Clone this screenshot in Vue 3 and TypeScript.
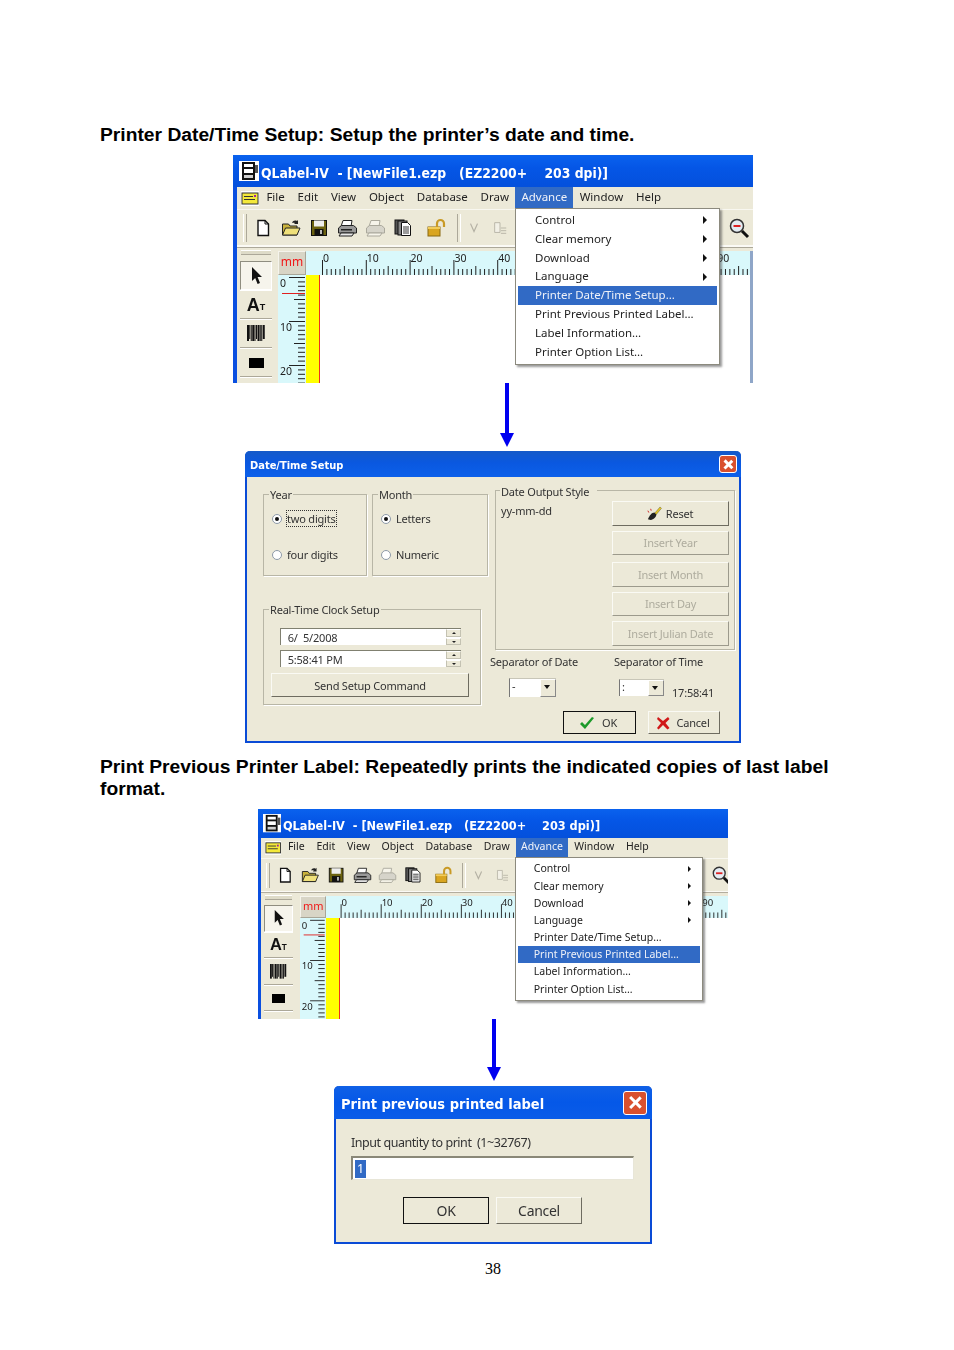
<script setup lang="ts">
interface Win { id: string; selected: string }
const windows: Win[] = [
  { id: 'a', selected: 'Printer Date/Time Setup…' },
  { id: 'b', selected: 'Print Previous Printed Label…' },
]
const appTitle = 'QLabel-IV  - [NewFile1.ezp   (EZ2200+    203 dpi)]'
const dateText = ' 6/  5/2008'
const timeText = ' 5:58:41 PM'
const quantityText = 'Input quantity to print  (1~32767)'
const menus: string[] = ['File', 'Edit', 'View', 'Object', 'Database', 'Draw', 'Advance', 'Window', 'Help']
const items: { label: string; sub: boolean }[] = [
  { label: 'Control', sub: true },
  { label: 'Clear memory', sub: true },
  { label: 'Download', sub: true },
  { label: 'Language', sub: true },
  { label: 'Printer Date/Time Setup…', sub: false },
  { label: 'Print Previous Printed Label…', sub: false },
  { label: 'Label Information…', sub: false },
  { label: 'Printer Option List…', sub: false },
]
// Labels 50–80 lie behind the open menu, so they are not drawn.
const hTicks = Array.from({ length: 100 }, (_, mm) => ({
  x: 16 + mm * 4.38,
  len: mm % 10 === 0 ? 15 : mm % 5 === 0 ? 9 : 6,
  label: mm % 10 === 0 && (mm <= 40 || mm >= 90) ? String(mm) : '',
}))
const vTicks = Array.from({ length: 26 }, (_, mm) => ({
  y: 2 + mm * 4.4,
  len: mm % 10 === 0 ? 16 : mm % 5 === 0 ? 11 : 7,
  label: mm % 10 === 0 ? String(mm) : '',
}))
const bars: number[] = [0, 3, 5, 7, 10, 12, 14, 17, 19, 21]
</script>

<template>
  <div class="page">
    <h2 class="heading first">Printer Date/Time Setup: Setup the printer’s date and time.</h2>

    <template v-for="w in windows" :key="w.id">
      <h2 v-if="w.id === 'b'" class="heading second">Print Previous Printer Label: Repeatedly prints the indicated copies of last label format.</h2>

      <div class="shot" :class="'shot-' + w.id">
        <div class="app">
          <div class="app-title">
            <svg class="app-icon" viewBox="0 0 20 20" width="20" height="20">
              <rect width="20" height="20" fill="#fff" />
              <rect x="3" y="1" width="13" height="18" fill="#111" />
              <rect x="5" y="3" width="9" height="3" fill="#fff" />
              <rect x="5" y="8" width="9" height="4" fill="#fff" />
              <rect x="5" y="14" width="9" height="3" fill="#cfcfcf" />
              <rect x="16" y="4" width="3" height="8" fill="#555" />
            </svg>
            <span class="app-name">{{ appTitle }}</span>
          </div>

          <div class="menubar">
            <svg class="menu-icon" viewBox="0 0 18 15" width="18" height="15">
              <rect width="18" height="15" fill="#fff" />
              <rect x="1" y="2" width="16" height="11" fill="#f4e93a" stroke="#333" />
              <rect x="3" y="5" width="9" height="1" fill="#333" />
              <rect x="3" y="8" width="11" height="1" fill="#333" />
              <rect x="13" y="4" width="2" height="2" fill="#a020a0" />
            </svg>
            <span v-for="m in menus" :key="m" class="menu-item" :class="{ active: m === 'Advance' }">{{ m }}</span>
          </div>

          <div class="toolbar">
            <span class="grip"></span>
            <span class="tb">
              <svg viewBox="0 0 20 20" width="20" height="20"><path d="M5 2.500h7l3.500 3.500v11.500H5z" fill="#fff" stroke="#111" stroke-width="1.400" /><path d="M12 2.500v3.500h3.500" fill="none" stroke="#111" /></svg>
            </span>
            <span class="tb">
              <svg viewBox="0 0 20 20" width="20" height="20"><path d="M1.500 6h6l1.500 2h7v9h-14.500z" fill="#c9b23c" stroke="#222" /><path d="M1.500 17l3-7h14.500l-3 7z" fill="#efe07a" stroke="#222" /><path d="M11 5c1-2.500 3-3 5-2l1 -1v4h-4l1-1c-1-.5-2-.5-3 0" fill="#222" /></svg>
            </span>
            <span class="tb">
              <svg viewBox="0 0 20 20" width="20" height="20"><rect x="2.500" y="2.500" width="15" height="15" fill="#6b6210" stroke="#111" /><rect x="5" y="2.500" width="10" height="6" fill="#eee" /><rect x="5.500" y="11" width="9" height="6.500" fill="#111" /><rect x="11" y="12" width="2" height="4" fill="#bbb" /></svg>
            </span>
            <span class="tb">
              <svg viewBox="0 0 22 20" width="22" height="20"><path d="M7 2.500h9l-1 6H5z" fill="#fff" stroke="#222" /><path d="M2.500 10l3-2.500h12l3 2.500v5H2.500z" fill="#999" stroke="#222" /><path d="M5 15h13l-2 3H3z" fill="#e8e8e8" stroke="#222" /><rect x="5" y="11" width="11" height="1.500" fill="#222" /></svg>
            </span>
            <span class="tb">
              <svg viewBox="0 0 22 20" width="22" height="20"><path d="M7 2.500h9l-1 6H5z" fill="#f6f4ea" stroke="#aaa89c" /><path d="M2.500 10l3-2.500h12l3 2.500v5H2.500z" fill="#d6d4ca" stroke="#aaa89c" /><path d="M5 15h13l-2 3H3z" fill="#f6f4ea" stroke="#aaa89c" /></svg>
            </span>
            <span class="tb">
              <svg viewBox="0 0 20 20" width="20" height="20"><rect x="2" y="2" width="9" height="14" fill="#555" stroke="#111" /><rect x="5" y="3" width="9" height="14" fill="#888" stroke="#111" /><path d="M8.500 4.500h6l3 3v10h-9z" fill="#fff" stroke="#111" /><path d="M10 9h6M10 11h6M10 13h6M10 15h6" stroke="#222" stroke-width=".9" /></svg>
            </span>
            <span class="tb lock">
              <svg viewBox="0 0 22 20" width="22" height="20"><rect x="2" y="9" width="12" height="9" fill="#d9a520" stroke="#8a6a10" /><path d="M2 9h12v2H2z" fill="#f3cd5a" /><path d="M11 9V5.500a3.500 3.500 0 0 1 7 0V9" fill="none" stroke="#c99a25" stroke-width="2.200" /></svg>
            </span>
            <span class="tb-sep"></span>
            <span class="tb tb-narrow">
              <svg viewBox="0 0 16 16" width="14" height="14"><path d="M4 3l4 9 4-9" fill="none" stroke="#b4b1a4" stroke-width="1.400" /></svg>
            </span>
            <span class="tb tb-narrow">
              <svg viewBox="0 0 18 18" width="16" height="16"><path d="M3 3h6v11H3z" fill="#f2f0e6" stroke="#b4b1a4" /><path d="M10 9h6M10 12h6M10 15h6" stroke="#b4b1a4" /></svg>
            </span>
            <span class="tb zoomer">
              <svg viewBox="0 0 22 22" width="22" height="22"><circle cx="9" cy="9" r="6.500" fill="#e4ecf2" stroke="#333" stroke-width="1.500" /><path d="M5.500 9h7" stroke="#d22" stroke-width="2" /><path d="M14 14l6 6" stroke="#111" stroke-width="3" /></svg>
            </span>
          </div>

          <div class="work">
            <div class="tools">
              <div class="tool-grip"></div>
              <div class="tool pressed">
                <svg viewBox="0 0 14 20" width="14" height="20"><path d="M3 1v14l3.200-3 2.400 6 2.400-1-2.400-6H13z" fill="#111" /></svg>
              </div>
              <div class="tool tool-a"><span class="big-a">A</span><span class="small-t">T</span></div>
              <div class="tool">
                <svg viewBox="0 0 18 17" width="18" height="17">
                  <rect v-for="(b, i) in bars" :key="i" :x="b * .75" y="0" :width="i % 3 === 0 ? 2 : 1" :height="i % 4 === 1 ? 14 : 16" fill="#111" />
                </svg>
              </div>
              <div class="tool"><span class="black-rect"></span></div>
              <div class="tool tool-last"></div>
            </div>

            <div class="view">
              <div class="corner">mm</div>
              <svg class="h-ruler" width="450" height="24">
                <rect v-for="t in hTicks" :key="t.x" :x="t.x" :y="24 - t.len" width="1" :height="t.len" fill="#222" />
                <template v-for="t in hTicks" :key="'l' + t.x">
                  <text v-if="t.label" :x="t.x + 1" y="11" class="ruler-text">{{ t.label }}</text>
                </template>
              </svg>
              <svg class="v-ruler" width="28" height="112">
                <rect v-for="t in vTicks" :key="t.y" :x="27 - t.len" :y="t.y" :width="t.len" height="1" fill="#222" />
                <rect x="4" y="18" width="23" height="1" fill="#e02020" />
                <template v-for="t in vTicks" :key="'l' + t.y">
                  <text v-if="t.label" x="2" :y="t.y + 10" class="ruler-text">{{ t.label }}</text>
                </template>
              </svg>
              <div class="margin-strip"></div>
              <div class="canvas"></div>
            </div>
          </div>

          <div class="menu">
            <div v-for="it in items" :key="it.label" class="menu-row" :class="{ hot: it.label === w.selected }">
              <span>{{ it.label }}</span>
              <i v-if="it.sub" class="sub-arrow"></i>
            </div>
          </div>
        </div>
      </div>

      <svg class="arrow" :class="'arrow-' + w.id" viewBox="0 0 16 65" width="16" height="65">
        <rect x="6" y="0" width="4" height="53" fill="#0000f0" />
        <path d="M1 51h14L8 65z" fill="#0000f0" />
      </svg>

      <div v-if="w.id === 'a'" class="dlg dlg-date">
        <div class="dlg-title date-title">
          <span class="title-text">Date/Time Setup</span>
          <span class="close close-small"></span>
        </div>
        <div class="date-body">
          <div class="left-col">
            <div class="group-row">
              <div class="group year">
                <span class="legend">Year</span>
                <label class="radio-row"><i class="radio on"></i><span class="focus">two digits</span></label>
                <label class="radio-row"><i class="radio"></i><span>four digits</span></label>
              </div>
              <div class="group month">
                <span class="legend">Month</span>
                <label class="radio-row"><i class="radio on"></i><span>Letters</span></label>
                <label class="radio-row"><i class="radio"></i><span>Numeric</span></label>
              </div>
            </div>
            <div class="group clock">
              <span class="legend">Real-Time Clock Setup</span>
              <div class="spin"><span>{{ dateText }}</span><i class="spin-btns"><b class="up"></b><b class="down"></b></i></div>
              <div class="spin"><span>{{ timeText }}</span><i class="spin-btns"><b class="up"></b><b class="down"></b></i></div>
              <div class="btn send">Send Setup Command</div>
            </div>
          </div>

          <div class="right-col">
            <div class="group output">
              <span class="legend output-legend">Date Output Style</span>
              <span class="format">yy-mm-dd</span>
              <div class="output-btns">
                <div class="btn">
                  <svg viewBox="0 0 18 16" width="17" height="15"><path d="M10 8l6-7 1.500 1.500-6 7z" fill="#e8c820" stroke="#553" stroke-width=".5" /><path d="M3 14c2-4 4-7 7-7l2 2c0 3-3 5-6 6z" fill="#222" /><path d="M3 5l1 2M6 3l.5 2" stroke="#c22" stroke-width="1" /></svg>
                  Reset
                </div>
                <div class="btn off">Insert Year</div>
                <div class="btn off spaced">Insert Month</div>
                <div class="btn off">Insert Day</div>
                <div class="btn off">Insert Julian Date</div>
              </div>
            </div>
            <div class="sep-row">
              <div class="sep sep-date">
                <span>Separator of Date</span>
                <div class="combo wide"><span>-</span><i class="combo-btn"></i></div>
              </div>
              <div class="sep sep-time">
                <span>Separator of Time</span>
                <div class="time-line">
                  <div class="combo"><span>:</span><i class="combo-btn"></i></div>
                  <span class="clock-text">17:58:41</span>
                </div>
              </div>
            </div>
            <div class="action-row">
              <div class="btn default action">
                <svg viewBox="0 0 16 14" width="16" height="14"><path d="M1 8l2-2 3 3 7-8 2 1-9 11z" fill="#1c9a2a" /></svg>
                OK
              </div>
              <div class="btn action cancel">
                <svg viewBox="0 0 14 14" width="14" height="14"><path d="M2 1l5 4 5-4 1.500 2-4 4 4 5-2 1.500-4.500-4.500L2.500 13.500 1 12l4-5-4-4z" fill="#d01818" /></svg>
                Cancel
              </div>
            </div>
          </div>
        </div>
      </div>
    </template>

    <div class="dlg dlg-print">
      <div class="dlg-title print-title">
        <span class="title-text">Print previous printed label</span>
        <span class="close"></span>
      </div>
      <div class="print-body">
        <div class="print-label">{{ quantityText }}</div>
        <div class="print-input"><span class="sel">1</span></div>
        <div class="print-actions">
          <div class="btn default print-btn">OK</div>
          <div class="btn print-btn">Cancel</div>
        </div>
      </div>
    </div>

    <div class="page-no">38</div>
  </div>
</template>

<style>
html, body { margin: 0; background: #fff; }
</style>

<style scoped>
.page {
  width: 954px;
  height: 1350px;
  overflow: hidden;
  box-sizing: border-box;
  padding-top: 124px;
  background: #fff;
  color: #000;
  font-family: "Noto Sans", "Liberation Sans", sans-serif;
}
.heading {
  margin: 0 0 9px 100px;
  width: 740px;
  font: bold 19.250px/22px "Liberation Sans", Arial, sans-serif;
}
.heading.second { margin-top: 13px; }

/* application window shots */
.shot { overflow: hidden; filter: blur(.35px); }
.shot-a { margin-left: 233px; width: 520px; height: 228px; }
.shot-b { margin-left: 258px; width: 470px; height: 210px; }
.app {
  position: relative;
  width: 520px;
  height: 232px;
  display: flex;
  flex-direction: column;
  background: #ece9d8;
  border-left: 4px solid #0a4fe0;
  box-sizing: border-box;
  font-size: 11.500px;
  color: #222;
}
.shot-b .app { zoom: .915; }
.app-title {
  height: 32px;
  margin-left: -4px;
  flex: none;
  display: flex;
  align-items: center;
  padding-left: 6px;
  gap: 2px;
  background: linear-gradient(180deg, #0a62ee 0%, #0556e6 40%, #0450dc 100%);
  color: #fff;
}
.app-name {
  font: bold 13.800px "DejaVu Sans Condensed", "DejaVu Sans", sans-serif;
  white-space: pre;
  padding-top: 3px;
}
.menubar {
  height: 22px;
  flex: none;
  display: flex;
  align-items: center;
  padding-left: 4px;
  border-bottom: 1px solid #f8f7f0;
}
.menu-icon { margin-right: 1px; }
.menu-item { height: 22px; line-height: 19px; padding: 0 6.400px; }
.menu-item.active { background: #316ac5; color: #f0f2f8; padding: 0 6px; }
.toolbar {
  height: 35px;
  flex: none;
  display: flex;
  align-items: center;
  padding-left: 6px;
  border-bottom: 2px solid #fbfaf5;
  box-shadow: 0 1px #aca899;
}
.grip { width: 2px; height: 28px; margin-right: 2px; border-left: 1px solid #fff; border-right: 1px solid #aca899; }
.tb { width: 28px; height: 28px; flex: none; display: flex; align-items: center; justify-content: center; }
.tb.lock { margin-left: 6px; }
.tb.tb-narrow { width: 26px; }
.tb-sep { width: 2px; height: 28px; margin: 0 0 0 6px; border-left: 1px solid #aca899; border-right: 1px solid #fff; }
.tb.zoomer { margin-left: auto; margin-right: 0; }
.work { flex: 1; min-height: 0; display: flex; }
.tools { width: 36px; flex: none; margin-left: 1px; padding-top: 3px; }
.tool-grip { height: 3px; margin: 0 3px 6px; background: #dedbc8; border-top: 1px solid #fff; border-bottom: 1px solid #aca899; }
.tool {
  box-sizing: border-box;
  height: 29px;
  width: 32px;
  margin: 0 0 0 2px;
  display: flex;
  align-items: center;
  justify-content: center;
  border-top: 1px solid #fff;
  border-bottom: 1px solid #aca899;
  background: #ece9d8;
}
.tool.pressed { background: #f6f4ec; border: 1px solid #8f8d80; border-right-color: #fff; border-bottom-color: #fff; }
.big-a { font: bold 18px "Liberation Sans", sans-serif; color: #111; line-height: 24px; }
.small-t { font: bold 9px "Liberation Sans", sans-serif; color: #111; line-height: 19px; margin-top: 5px; }
.black-rect { width: 15px; height: 10px; background: #000; }
.view {
  flex: 1;
  margin: 4px 0 0 4px;
  display: grid;
  grid-template-columns: 28px 14px 1fr;
  grid-template-rows: 24px 1fr;
  background: #fff;
  border-right: 3px solid #8fa6c8;
  min-height: 0;
  overflow: hidden;
}
.shot-b .view { margin-left: 6px; grid-template-columns: 28px 15px 1fr; }
.corner {
  background: #d8d5c6;
  border: 1px solid #f5f4ec;
  border-right-color: #a8a698;
  border-bottom-color: #a8a698;
  box-sizing: border-box;
  color: #f01818;
  font-size: 12px;
  line-height: 20px;
  text-align: center;
}
.h-ruler { grid-column: 2 / 4; background: #d9f8fb; border-bottom: 1px solid #a8a698; box-sizing: content-box; }
.ruler-text { font: 10.500px "Noto Sans", sans-serif; fill: #222; }
.v-ruler { background: #d9f8fb; border-right: 1px solid #a8a698; }
.margin-strip { background: #ffff00; border-right: 1.500px solid #f03020; }
.canvas { background: #fff; }
.menu {
  position: absolute;
  left: 278px;
  top: 53px;
  width: 205px;
  height: 157px;
  box-sizing: border-box;
  padding: 2px 2px;
  background: #fff;
  border: 1px solid #8c8a7e;
  box-shadow: 2px 2px 2px rgba(70, 70, 70, .55);
}
.shot-b .menu { padding-top: 2px; }
.menu-row {
  height: 18.800px;
  line-height: 18.800px;
  padding: 0 10px 0 17px;
  display: flex;
  align-items: center;
  justify-content: space-between;
}
.menu-row.hot { background: #316ac5; color: #eef1f8; }
.sub-arrow { width: 0; height: 0; border-left: 4px solid #111; border-top: 4px solid transparent; border-bottom: 4px solid transparent; }

/* arrows */
.arrow { display: block; }
.arrow-a { margin: -1px 0 0 499px; }
.arrow-b { margin: -3px 0 0 486px; }

/* dialogs */
.dlg {
  box-sizing: border-box;
  background: #ece9d8;
  border: 2px solid #0a4bd6;
  border-top-width: 0;
  border-radius: 5px 5px 0 0;
  filter: blur(.35px);
  color: #333;
  font-size: 11px;
  letter-spacing: -.2px;
}
.dlg-title {
  display: flex;
  align-items: center;
  justify-content: space-between;
  color: #fff;
  font-family: "DejaVu Sans Condensed", "DejaVu Sans", sans-serif;
  font-weight: bold;
  letter-spacing: 0;
  margin: 0 -2px;
  border-radius: 5px 5px 0 0;
}
.title-text { padding-top: 3px; }
.date-title {
  height: 26px;
  padding: 0 4px 0 5px;
  font-size: 11px;
  background: linear-gradient(180deg, #1459c8 0%, #0a58e0 45%, #0c60ea 100%);
}
.print-title {
  height: 33px;
  padding: 0 5px 0 7px;
  font-size: 14.500px;
  background: linear-gradient(180deg, #1060e6 0%, #0558e8 50%, #0a5ce8 100%);
}
.close {
  width: 24px;
  height: 24px;
  position: relative;
  box-sizing: border-box;
  border: 1px solid #fff;
  border-radius: 3px;
  background: #d9502e;
}
.close-small { width: 18px; height: 18px; }
.close::before, .close::after {
  content: "";
  position: absolute;
  left: 50%;
  top: 16%;
  width: 2.500px;
  height: 68%;
  margin-left: -1.250px;
  background: #fff;
  transform: rotate(45deg);
}
.close::after { transform: rotate(-45deg); }

.dlg-date { margin-left: 245px; width: 496px; height: 292px; margin-top: 4px; }
.date-body { display: flex; height: 266px; }
.left-col { width: 225px; flex: none; margin-left: 16px; padding-top: 17px; }
.group-row { display: flex; gap: 5px; }
.group { position: relative; box-sizing: border-box; border: 1px solid #b8b6a6; box-shadow: 1px 1px 0 #fff; }
.legend { position: absolute; top: -7px; left: 5px; line-height: 14px; background: #ece9d8; padding: 0 1px; white-space: pre; }
.year { width: 104px; height: 82px; }
.month { width: 116px; height: 82px; }
.year, .month { display: flex; flex-direction: column; gap: 21px; padding: 16px 0 0 8px; }
.radio-row { display: flex; align-items: center; gap: 5px; height: 15px; }
.radio { width: 10px; height: 10px; box-sizing: border-box; flex: none; position: relative; border-radius: 50%; background: #fff; border: 1px solid #8e9aa8; }
.radio.on::after { content: ""; position: absolute; left: 2px; top: 2px; width: 4px; height: 4px; border-radius: 50%; background: #111; }
.focus { outline: 1px dotted #333; outline-offset: 0; }
.clock { width: 218px; height: 96px; margin-top: 33px; display: flex; flex-direction: column; padding: 18px 0 0 16px; gap: 5px; }
.spin {
  width: 181px;
  height: 17px;
  flex: none;
  box-sizing: border-box;
  display: flex;
  justify-content: space-between;
  background: #fff;
  border-top: 1px solid #808070;
  border-left: 1px solid #808070;
  line-height: 17px;
  padding-left: 4px;
  white-space: pre;
}
.spin-btns { display: flex; flex-direction: column; width: 15px; gap: 1px; }
.spin-btns b { flex: 1; background: #ece9d8; border: 1px solid #c4c2b2; border-top-color: #fff; position: relative; }
.spin-btns b::after { content: ""; position: absolute; left: 5px; width: 0; height: 0; border-left: 2px solid transparent; border-right: 2px solid transparent; }
.spin-btns .up::after { top: 1.500px; border-bottom: 2.500px solid #222; }
.spin-btns .down::after { top: 2px; border-top: 2.500px solid #222; }
.btn {
  box-sizing: border-box;
  display: flex;
  align-items: center;
  justify-content: center;
  gap: 1px;
  background: #ece9d8;
  border: 1px solid #fafaf4;
  border-right: 1px solid #6e6c60;
  border-bottom: 1.500px solid #6e6c60;
  color: #333;
  white-space: pre;
}
.btn.off { color: #aeac9e; border-bottom-color: #9c9a8c; border-right-color: #9c9a8c; }
.btn.default { border: 1.500px solid #111; }
.send { width: 198px; height: 24px; margin: 1px 0 0 -9px; }
.right-col { flex: 1; min-width: 0; margin-left: 2px; margin-top: 13px; }
.output { width: 240px; height: 160px; margin-left: 5px; padding: 10px 5px 0 5px; display: flex; justify-content: space-between; align-items: flex-start; }
.output-legend { left: 4px; top: -6px; padding-right: 8px; }
.format { margin-top: 2px; line-height: 16px; }
.output-btns { width: 117px; display: flex; flex-direction: column; gap: 5px; }
.output-btns .btn { height: 24.500px; flex: none; }
.output-btns .spaced { margin-top: 2px; }
.sep-row { display: flex; margin-top: 4px; }
.sep { display: flex; flex-direction: column; gap: 9px; line-height: 15px; }
.sep-date { width: 124px; }
.combo {
  width: 45px;
  height: 17px;
  box-sizing: border-box;
  display: flex;
  justify-content: space-between;
  background: #fff;
  border-left: 1px solid #777;
  border-top: 1px solid #c8c6b8;
  padding-left: 2px;
  line-height: 14px;
  margin-left: 5px;
}
.combo.wide { width: 47px; height: 19px; margin-left: 19px; }
.combo-btn { width: 14px; position: relative; background: #ece9d8; border: 1px solid #888; border-left-color: #fff; border-top-color: #fff; }
.combo-btn::after { content: ""; position: absolute; left: 3px; top: 5px; width: 0; height: 0; border-left: 3.500px solid transparent; border-right: 3.500px solid transparent; border-top: 4px solid #111; }
.time-line { display: flex; align-items: flex-end; gap: 8px; margin-top: 1px; }
.clock-text { line-height: 14px; margin-bottom: -4px; }
.action-row { display: flex; gap: 12px; margin: 14px 0 0 73px; }
.action { width: 73px; height: 23px; gap: 4px; }
.action.cancel { width: 72px; }

.dlg-print { margin: 5px 0 0 334px; width: 318px; height: 158px; font-size: 12.500px; letter-spacing: -.45px; }
.print-body { padding: 15px 15px 0 15px; }
.print-label { line-height: 18px; white-space: pre; }
.print-input {
  box-sizing: border-box;
  width: 283px;
  height: 24px;
  margin-top: 4px;
  padding: 2px 2px;
  background: #fff;
  border: 1px solid #e8e6d8;
  border-top: 2px solid #8a8878;
  border-left: 2px solid #8a8878;
  line-height: 18px;
}
.sel { display: inline-block; background: #316ac5; color: #fff; padding: 0 2px; line-height: 18px; }
.print-actions { display: flex; gap: 7px; margin: 17px 0 0 52px; }
.print-btn { width: 86px; height: 27px; font-size: 14px; letter-spacing: -.3px; }

.page-no { margin: 16px 0 0 485px; font: 16px/18px "Liberation Serif", "Times New Roman", serif; }
</style>
